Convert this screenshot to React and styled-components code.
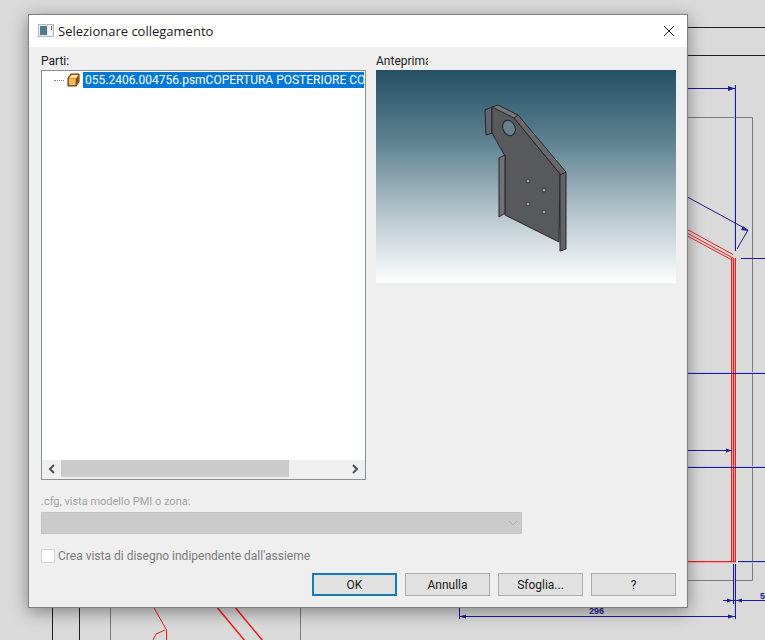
import React, { useState } from 'react';
import styled, { createGlobalStyle } from 'styled-components';

const GlobalStyle = createGlobalStyle`
  * {
    box-sizing: border-box;
  }

  body {
    margin: 0;
    background: #dadada;
    font-family: Roboto, 'Liberation Sans', Arial, sans-serif;
    font-size: 12px;
    line-height: 16px;
    color: #1a1a1a;
  }

  button, input, select {
    font: inherit;
    color: inherit;
    margin: 0;
  }
`;

const Workspace = styled.main`
  position: relative;
  display: flex;
  min-height: 100vh;
  padding: 14px 77px 32px 28px;
  overflow: hidden;
`;

const DrawingSheet = styled.svg`
  position: absolute;
  top: 0;
  right: 0;
  width: 765px;
  height: 640px;
`;

const Dialog = styled.section`
  position: relative;
  flex: 1;
  min-width: 0;
  display: flex;
  flex-direction: column;
  background: #efefef;
  border: 1px solid #808080;
  box-shadow: 0 4px 16px rgba(0, 0, 0, 0.4);
`;

const TitleBar = styled.header`
  display: flex;
  align-items: center;
  height: 32px;
  padding: 0 12px 0 9px;
  gap: 4px;
  background: #fff;
`;

const Title = styled.h1`
  flex: 1;
  margin: 0;
  font-family: 'Open Sans', 'Segoe UI', sans-serif;
  font-size: 13px;
  font-weight: 400;
`;

const CloseButton = styled.button`
  display: flex;
  align-items: center;
  justify-content: center;
  width: 12px;
  height: 16px;
  padding: 0;
  border: none;
  background: none;
`;

const DialogBody = styled.div`
  flex: 1;
  display: flex;
  flex-direction: column;
  padding: 6px 11px 11px 12px;
`;

const Panels = styled.div`
  flex: 1;
  display: grid;
  grid-template-columns: minmax(0, 13fr) minmax(0, 12fr);
  gap: 10px;
`;

const Panel = styled.div`
  display: flex;
  flex-direction: column;
  gap: 1px;
`;

const PanelLabel = styled.div`
  width: ${props => props.$width || 'auto'};
  overflow: hidden;
  white-space: nowrap;
`;

const TreeBox = styled.div`
  flex: 1;
  display: flex;
  flex-direction: column;
  border: 1px solid #8a8f94;
  background: #fff;
`;

const TreeList = styled.ul`
  flex: 1;
  margin: 0;
  padding: 1px 1px 0 12px;
  list-style: none;
`;

const TreeItem = styled.li`
  display: flex;
  align-items: center;
  gap: 3px;
`;

const TreeBranch = styled.span`
  flex: none;
  width: 10px;
  border-top: 1px dotted #808080;
`;

const TreeLabel = styled.span`
  flex: 1;
  min-width: 0;
  overflow: hidden;
  white-space: nowrap;
  padding-left: 2px;
  background: #0078d7;
  color: #fff;
`;

const ScrollBar = styled.div`
  display: flex;
  align-items: stretch;
  height: 19px;
  padding: 0 1px 2px;
  background: #efefef;
`;

const ScrollButton = styled.button`
  display: flex;
  align-items: center;
  justify-content: center;
  width: 18px;
  padding: 0;
  border: none;
  background: none;
`;

const ScrollTrack = styled.div`
  flex: 1;
  display: flex;
`;

const ScrollThumb = styled.div`
  width: 80%;
  background: #cbcbcb;
`;

const Preview = styled.div`
  height: 213px;
  background: linear-gradient(#245064, #5d8190 33%, #b4c4cb 67%, #f4f6f6 95%, #fff);

  svg {
    display: block;
    width: 100%;
    height: 100%;
  }
`;

const OptionLabel = styled.label`
  margin-top: 14px;
  font-size: 11px;
  color: #a5a5a5;
`;

const SelectWrap = styled.div`
  position: relative;
  margin-top: 2px;
  margin-right: 154px;
  height: 22px;

  svg {
    position: absolute;
    right: 4px;
    top: 7px;
  }
`;

const ConfigSelect = styled.select`
  appearance: none;
  display: block;
  width: 100%;
  height: 100%;
  border: 1px solid #c4c4c4;
  border-radius: 0;
  background: #cbcbcb;

  &:disabled {
    opacity: 1;
  }
`;

const CheckRow = styled.label`
  display: flex;
  align-items: center;
  gap: 3px;
  margin-top: 14px;
  color: #7b7b7b;
`;

const CheckBox = styled.input`
  appearance: none;
  width: 14px;
  height: 14px;
  border: 1px solid #d4d4d4;
  background: #fff;
`;

const ButtonRow = styled.footer`
  display: flex;
  justify-content: flex-end;
  gap: 8px;
  margin-top: 9px;
`;

const DialogButton = styled.button`
  width: 85px;
  height: 23px;
  padding: 0;
  border: ${props => (props.$primary ? '2px solid #1a7ab8' : '1px solid #adadad')};
  background: #e1e1e1;
`;

const WindowIcon = () => (
  <svg width="16" height="14" viewBox="0 0 16 14">
    <rect x="0.5" y="0.5" width="15" height="12" fill="#e6eaec" stroke="#b3bcc2" />
    <path d="M2 2h7v9H2z" fill="#54788c" />
    <path d="M10 2h4v9h-4z" fill="#f6f6f6" />
    <path d="M13.5 2v4" stroke="#66757e" />
  </svg>
);

const PartIcon = () => (
  <svg width="13" height="14" viewBox="0 0 13 14">
    <path d="M1 5L4 1h8v8l-3 4H1z" fill="#d98a2b" stroke="#4e2b08" strokeLinejoin="round" />
    <path d="M2 5l3-3h6L9 5z" fill="#ffe3a0" />
    <path d="M2 6h6v6H2z" fill="#f3b75e" />
    <path d="M9 6l2-3v6l-2 3z" fill="#8a4c12" />
  </svg>
);

const Chevron = ({ d, color = '#505050', weight = 2 }) => (
  <svg width="10" height="10" viewBox="0 0 10 10">
    <path d={d} fill="none" stroke={color} strokeWidth={weight} />
  </svg>
);

const SheetMetalPart = () => (
  <svg viewBox="0 0 300 213" role="img" aria-label="Anteprima">
    <g stroke="#25272b" strokeWidth="1" strokeLinejoin="round">
      <path d="M109 40l7-3v26l-6 2z" fill="#62656b" />
      <path d="M116 37l6-2 20 10-4 4-17-7z" fill="#77777b" />
      <path d="M116 37l22 11 46 56-1 68-54-27V86l-13-23z" fill="#58595c" />
      <path d="M138 48l4-3 48 57-5 3z" fill="#68686c" />
      <path d="M123 88l6-3v58l-6 4z" fill="#717176" />
      <path d="M184 105l6-3v77l-6 2z" fill="#606368" />
    </g>
    <ellipse cx="133" cy="58" rx="6" ry="8" transform="rotate(-24 133 58)" fill="#64818d" stroke="#222529" />
    <g fill="#a9b0b3" stroke="#2c2e32">
      <circle cx="152" cy="111" r="2" />
      <circle cx="168" cy="120" r="2" />
      <circle cx="152" cy="134" r="2" />
      <circle cx="168" cy="142" r="2" />
    </g>
  </svg>
);

const TechnicalDrawing = () => (
  <DrawingSheet viewBox="0 0 765 640" aria-hidden="true">
    {/* sheet frame */}
    <g fill="none" stroke="#202020">
      <path d="M600 27.5h165M600 55.5h165M52.5 600v40M79.5 600v40" />
      <path d="M600 117.5h152.5v463H600M110.5 600v40M300.5 600v40" stroke="#7c7c7c" />
    </g>

    {/* light edges beside the long lines */}
    <path d="M733.5 258v304" fill="none" stroke="#f5a3a0" strokeWidth="5" />
    <path d="M600 562.5h136" fill="none" stroke="#f5a3a0" />
    <path d="M734.5 85v166M600 372.5h165M600 466.5h165M738 562.5h27M734.5 564v55" fill="none" stroke="#c3c2ee" />

    {/* part outline */}
    <g fill="none" stroke="#ee1c1c">
      <path d="M680 225.5l53 29M680 229l53 29M680 232l52 28M600 561.5h136" />
      <path d="M731.5 258v304M733.5 258v304M735.5 258v304" />
      <path d="M153 606l13 23M166.5 629v11M165 630l-9 4-3 6" />
      <path d="M216 606l29 35M234 606l29 35" strokeWidth="1.5" />
    </g>

    {/* dimensions */}
    <g fill="none" stroke="#1f1b94">
      <path d="M600 88.5h135M735.5 85v166M680 193l68 37-11 19" />
      <path d="M741 258.5h24M600 373.5h165M600 450.5h132M600 467.5h165M738 561.5h27" />
      <path d="M733.5 564v40M735.5 564v55M723 600.5h42M459 616.5h276M459.5 606v13" />
    </g>
    <g fill="#1f1b94">
      <path d="M735 88.5l-7-2.5v5zM748 231l-7-1 2-4zM732 450.5l-6-2v4zM733 600.5l-6-2v4zM736 600.5l6-2v4zM735 616.5l-7-2v4zM459 616.5l7-2v4z" />
      <g fontFamily="Liberation Sans, Arial, sans-serif" fontSize="9" fontWeight="700">
        <text x="589" y="614">296</text>
        <text x="760" y="599">5</text>
      </g>
    </g>
  </DrawingSheet>
);

const App = () => {
  const [selected, setSelected] = useState(true);

  return (
    <>
      <GlobalStyle />
      <Workspace>
        <TechnicalDrawing />
        <Dialog role="dialog" aria-labelledby="dialog-title">
          <TitleBar>
            <WindowIcon />
            <Title id="dialog-title">Selezionare collegamento</Title>
            <CloseButton aria-label="Chiudi">
              <svg width="12" height="12" viewBox="0 0 12 12">
                <path d="M1 1l10 10M11 1L1 11" stroke="#222" />
              </svg>
            </CloseButton>
          </TitleBar>

          <DialogBody>
            <Panels>
              <Panel>
                <PanelLabel>Parti:</PanelLabel>
                <TreeBox>
                  <TreeList role="tree">
                    <TreeItem role="treeitem" aria-selected={selected} onClick={() => setSelected(true)}>
                      <TreeBranch />
                      <PartIcon />
                      <TreeLabel>055.2406.004756.psmCOPERTURA POSTERIORE CO</TreeLabel>
                    </TreeItem>
                  </TreeList>
                  <ScrollBar>
                    <ScrollButton aria-label="Scorri a sinistra">
                      <Chevron d="M7 1L3 5l4 4" />
                    </ScrollButton>
                    <ScrollTrack>
                      <ScrollThumb />
                    </ScrollTrack>
                    <ScrollButton aria-label="Scorri a destra">
                      <Chevron d="M3 1l4 4-4 4" />
                    </ScrollButton>
                  </ScrollBar>
                </TreeBox>
              </Panel>

              <Panel>
                <PanelLabel $width="52px">Anteprima</PanelLabel>
                <Preview>
                  <SheetMetalPart />
                </Preview>
              </Panel>
            </Panels>

            <OptionLabel htmlFor="config">.cfg, vista modello PMI o zona:</OptionLabel>
            <SelectWrap>
              <ConfigSelect id="config" disabled />
              <Chevron d="M1 2l4 4 4-4" color="#adadad" weight={1} />
            </SelectWrap>

            <CheckRow>
              <CheckBox type="checkbox" disabled />
              Crea vista di disegno indipendente dall'assieme
            </CheckRow>

            <ButtonRow>
              <DialogButton $primary>OK</DialogButton>
              <DialogButton>Annulla</DialogButton>
              <DialogButton>Sfoglia...</DialogButton>
              <DialogButton>?</DialogButton>
            </ButtonRow>
          </DialogBody>
        </Dialog>
      </Workspace>
    </>
  );
};

export default App;
